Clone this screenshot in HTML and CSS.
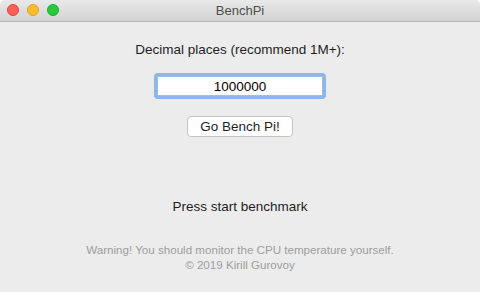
FILE: index.html
```html
<!DOCTYPE html>
<html>
<head>
    <meta charset="UTF-8">
    <title>BenchPi</title>
    <link rel="stylesheet" href="styles.css">
</head>
<body>
    <div class="window">
        <div class="titlebar">
            <div class="lights">
                <span class="light close"></span>
                <span class="light min"></span>
                <span class="light max"></span>
            </div>
            <div class="title">BenchPi</div>
        </div>
        <div class="content">
            <p class="label">Decimal places (recommend 1M+):</p>
            <div class="field"><input type="text" value="1000000"/></div>
            <button class="btn">Go Bench Pi!</button>
            <p class="status">Press start benchmark</p>
            <p class="note">Warning! You should monitor the CPU temperature yourself.<br/>© 2019 Kirill Gurovoy</p>
        </div>
    </div>
</body>
</html>
```

FILE: styles.css
```css
html,body,div,p{ margin: 0; padding: 0; }
body{ background: #fff; font-family: "Liberation Sans", Arial, sans-serif; font-size: 13.5px; color: #1e1e1e; }
.window{ width: 480px; height: 292px; background: #ececec; border-radius: 5px 5px 0 0; overflow: hidden; display: flex; flex-direction: column; }
.titlebar{ height: 21px; border-bottom: 1px solid #b3b3b3; background: linear-gradient(#e9e9e9, #d2d2d2); position: relative; display: flex; align-items: center; justify-content: center; }
.lights{ position: absolute; left: 7px; top: 4px; display: flex; gap: 8px; }
.light{ width: 12px; height: 12px; border-radius: 50%; box-sizing: border-box; }
.close{ background: #fc5f57; border: 1px solid #e0443e; }
.min{ background: #fdbc2e; border: 1px solid #dea123; }
.max{ background: #28c840; border: 1px solid #1aab29; }
.title{ color: #4d4d4d; font-size: 13px; }
.content{ flex: 1; display: flex; flex-direction: column; align-items: center; }
.label{ margin-top: 20px; line-height: 16px; }
.field{ margin-top: 15px; width: 166px; height: 20px; border: 3px solid #8cb6ee; border-radius: 4px; background: #fff; display: flex; }
.field input{ border: 1px solid #a6bcdb; width: 100%; box-sizing: border-box; text-align: center; font: 13.5px "Liberation Sans", Arial, sans-serif; color: #000; outline: none; padding: 0; }
.btn{ margin-top: 17px; width: 106px; height: 21px; background: #fff; border: 1px solid #c3c3c3; border-radius: 4px; font: 13.5px "Liberation Sans", Arial, sans-serif; color: #1e1e1e; padding: 0; }
.status{ margin-top: 62px; line-height: 16px; }
.note{ margin-top: 27px; font-size: 11.6px; line-height: 15px; color: #9d9d9d; text-align: center; }
```
